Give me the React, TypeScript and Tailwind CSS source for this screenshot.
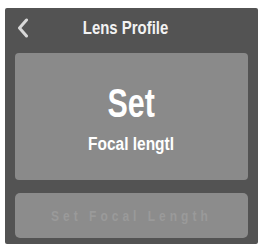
import React from "react";

export default function App() {
  const font = { fontFamily: '"Liberation Sans", Arial, sans-serif' };
  return (
    <div className="w-[262px] h-[248px] bg-white pt-[8px] pl-[5px]" style={font}>
      <div className="w-[253px] h-[236px] bg-[#535353] flex flex-col rounded-[2px]">
        <div className="h-[45px] relative">
          <svg className="absolute left-[12px] top-[10px]" width="12" height="20" viewBox="0 0 12 20">
            <path d="M9.5 2 L2.5 10 L9.5 18" stroke="#d8d8d8" strokeWidth="3" fill="none" strokeLinecap="round" strokeLinejoin="round" />
          </svg>
          <div className="pt-[11px] w-full flex justify-center pr-[12px]">
            <span className="inline-block scale-x-[0.83] text-[18px] font-bold text-[#f2f2f2] leading-none whitespace-nowrap">
              Lens Profile
            </span>
          </div>
        </div>
        <div className="mx-[10px] h-[127px] bg-[#8a8a8a] rounded-[4px] flex flex-col items-center pt-[30px]">
          <span className="inline-block scale-x-[0.76] text-[40px] font-bold text-white leading-none">Set</span>
          <span className="inline-block scale-x-[0.86] mt-[12px] text-[18px] font-bold text-white leading-none whitespace-nowrap">Focal lengtl</span>
        </div>
        <div className="mx-[10px] mt-[13px] h-[45px] bg-[#8c8c8c] rounded-[5px] flex items-center justify-center">
          <span className="inline-block scale-x-[0.8] text-[15px] font-bold text-[#9a9a9a] tracking-[5px] leading-none whitespace-nowrap">Set Focal Length</span>
        </div>
      </div>
    </div>
  );
}
